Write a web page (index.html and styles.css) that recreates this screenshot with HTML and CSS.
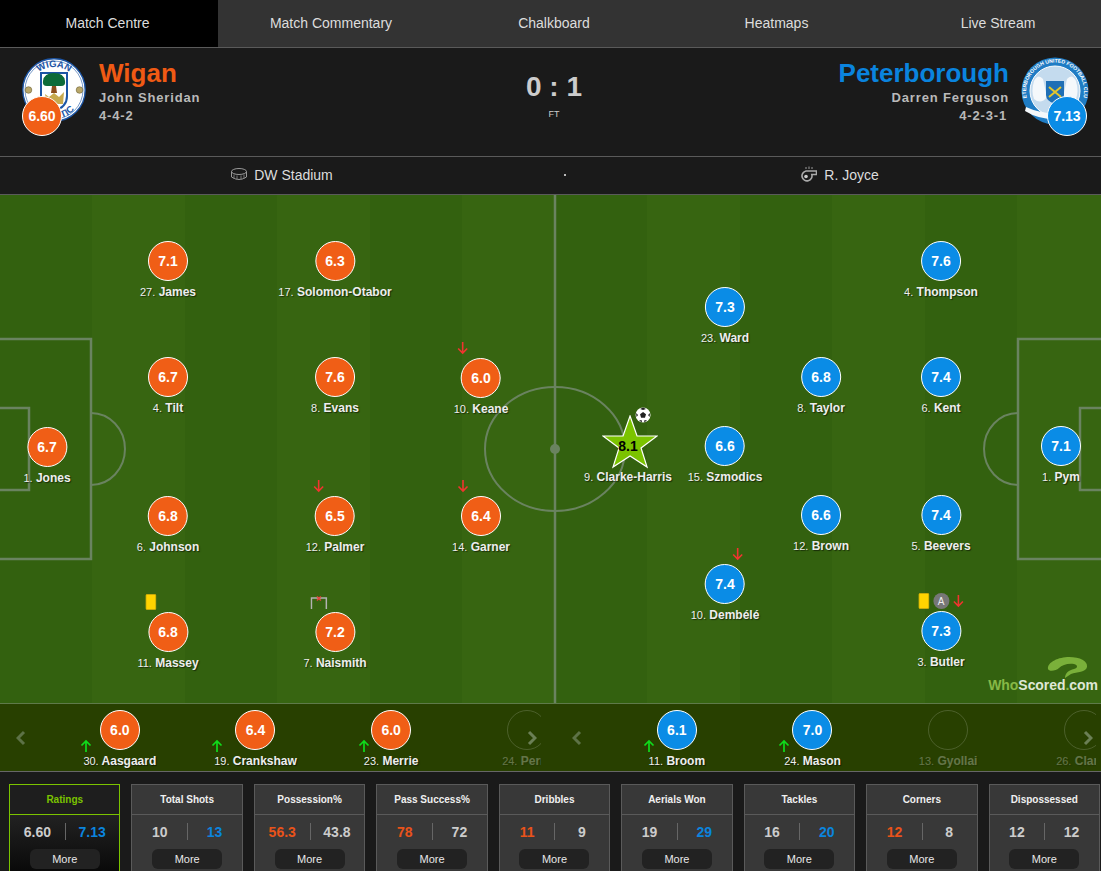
FILE: index.html
```html
<!DOCTYPE html>
<html lang="en">
<head>
<meta charset="utf-8">
<title>Wigan 0 : 1 Peterborough</title>
<link rel="stylesheet" href="styles.css">
</head>
<body>
<nav class="tabs">
  <a class="tab tab-active">Match Centre</a>
  <a class="tab">Match Commentary</a>
  <a class="tab">Chalkboard</a>
  <a class="tab">Heatmaps</a>
  <a class="tab tab-last">Live Stream</a>
</nav>

<header class="match">
  <div class="team">
    <div class="crest">
      <svg class="crest-svg" width="64" height="64" viewBox="0 0 64 64">
        <defs><path id="wigan-top" d="M7 34 A25 25 0 0 1 57 34"/><path id="wigan-bot" d="M5 34 A27 27 0 0 0 59 34"/></defs>
        <circle cx="32" cy="32" r="31.2" fill="#fff" stroke="#1c55a5" stroke-width="1.4"/>
        <circle cx="32" cy="32" r="29" fill="none" stroke="#1c55a5" stroke-width=".6"/>
        <text class="crest-text wigan-text"><textPath href="#wigan-top" startOffset="50%" text-anchor="middle">WIGAN</textPath></text>
        <text class="crest-text wigan-text"><textPath href="#wigan-bot" startOffset="50%" text-anchor="middle">ATHLETIC</textPath></text>
        <circle cx="6.500" cy="32" r="3.300" fill="#b9a76a" stroke="#6d6234" stroke-width=".6"/>
        <circle cx="57.500" cy="32" r="3.300" fill="#b9a76a" stroke="#6d6234" stroke-width=".6"/>
        <path d="M18 14 H46 V38 Q46 50 32 54 Q18 50 18 38 Z" fill="#1c55a5"/>
        <path d="M20 16 H44 V38 Q44 48 32 52 Q20 48 20 38 Z" fill="#fff"/>
        <path d="M21 23 Q22 15 32 15 Q42 15 43 23 Q44 28 39 28 H25 Q20 28 21 23 Z" fill="#0d6b39"/>
        <path d="M30 28 H34 L35 35 H29 Z" fill="#8c4d1c"/>
        <path d="M23 36 L27 39 L32 35 L37 39 L42 34 L41 46 H25 Z" fill="#c7a94e"/>
      </svg>
      <span class="team-rating rating-home">6.60</span>
    </div>
    <div class="team-info">
      <h1 class="team-name home-name">Wigan</h1>
      <p class="team-line">John Sheridan</p>
      <p class="team-line">4-4-2</p>
    </div>
  </div>
  <div class="score">
    <div class="score-value">0 : 1</div>
    <div class="score-status">FT</div>
  </div>
  <div class="team team-away">
    <div class="team-info info-away">
      <h1 class="team-name away-name">Peterborough</h1>
      <p class="team-line">Darren Ferguson</p>
      <p class="team-line line-formation">4-2-3-1</p>
    </div>
    <div class="crest crest-away">
      <svg class="crest-svg" width="68" height="68" viewBox="0 0 68 68">
        <defs><path id="pufc-ring" d="M6 42 A29 29 0 1 1 62 42"/></defs>
        <circle cx="34" cy="34" r="33.5" fill="#1f7cc4"/>
        <circle cx="34" cy="34" r="25" fill="#c4dbee" stroke="#fff" stroke-width="1"/>
        <text class="crest-text pufc-text"><textPath href="#pufc-ring" startOffset="50%" text-anchor="middle">PETERBOROUGH UNITED FOOTBALL CLUB</textPath></text>
        <path d="M13 24 Q17 16 22 22 L26 40 Q20 48 13 42 Q10 34 13 24 Z" fill="#f4f8fb"/>
        <path d="M55 24 Q51 16 46 22 L42 40 Q48 48 55 42 Q58 34 55 24 Z" fill="#f4f8fb"/>
        <path d="M25 24 H43 V38 Q43 44 34 47 Q25 44 25 38 Z" fill="#1f6fb5"/>
        <path d="M28 30 L40 40 M40 30 L28 40" stroke="#e5c62c" stroke-width="2"/>
        <path d="M5 50 Q22 58 44 56 L42 62 Q20 64 4 54 Z" fill="#f4f8fb"/>
      </svg>
      <span class="team-rating rating-away">7.13</span>
    </div>
  </div>
</header>

<div class="venue">
  <div class="venue-cell">
    <svg width="16" height="13" viewBox="0 0 16 13" class="venue-icon"><ellipse cx="8" cy="3.500" rx="7.500" ry="3" fill="none" stroke="#999"/><path d="M.5 3.500 V9 Q8 14 15.500 9 V3.500" fill="none" stroke="#999"/><path d="M3 6.500 V11 M6 7.500 V12 M10 7.500 V12 M13 6.500 V11" stroke="#777"/></svg>
    <span>DW Stadium</span>
  </div>
  <div class="venue-dot"></div>
  <div class="venue-cell venue-ref">
    <svg width="17" height="17" viewBox="0 0 17 17" class="venue-icon"><path d="M6 1 V3 M9 .5 V3 M12 1 V3" stroke="#999"/><path d="M6 5 H16.500 V8.500 H11.800 A5 5 0 1 1 6 5 Z" fill="none" stroke="#aaa" stroke-width="1.600"/><circle cx="6" cy="10.500" r="1.800" fill="#ccc"/></svg>
    <span>R. Joyce</span>
  </div>
</div>

<main class="pitch">
  <svg class="pitch-lines" width="1101" height="508" viewBox="0 0 1101 508">
    <path d="M0 144 H91 V364 H0 M0 213 H29 V295 H0 M1101 144 H1018 V364 H1101 M1101 213 H1080 V295 H1101"/>
    <path class="thin" d="M91 218 A34 36 0 0 1 91 290 M1018 218 A34 36 0 0 0 1018 290"/>
    <path d="M555 0 V508"/>
    <ellipse class="thin" cx="555" cy="254" rx="70" ry="62"/>
    <circle class="spot" cx="555" cy="254" r="5"/>
  </svg>

  <div class="player" style="--x:47;--y:447"><span class="badge home">6.7</span><span class="label"><i>1.</i> Jones</span></div>
  <div class="player" style="--x:168;--y:261"><span class="badge home">7.1</span><span class="label"><i>27.</i> James</span></div>
  <div class="player" style="--x:168;--y:377"><span class="badge home">6.7</span><span class="label"><i>4.</i> Tilt</span></div>
  <div class="player" style="--x:168;--y:516"><span class="badge home">6.8</span><span class="label"><i>6.</i> Johnson</span></div>
  <div class="player" style="--x:168;--y:632"><span class="badge home">6.8<svg class="ev ev-card" width="11" height="16" viewBox="0 0 11 16"><rect x=".5" y=".5" width="10" height="15" rx="1" fill="#ffd400" stroke="#c7a90a"/></svg></span><span class="label"><i>11.</i> Massey</span></div>
  <div class="player" style="--x:335;--y:261"><span class="badge home">6.3</span><span class="label"><i>17.</i> Solomon-Otabor</span></div>
  <div class="player" style="--x:335;--y:377"><span class="badge home">7.6</span><span class="label"><i>8.</i> Evans</span></div>
  <div class="player" style="--x:335;--y:516"><span class="badge home">6.5<svg class="ev ev-arrow-near" width="12" height="14" viewBox="0 0 12 14"><use href="#arrow-down"/></svg></span><span class="label"><i>12.</i> Palmer</span></div>
  <div class="player" style="--x:335;--y:632"><span class="badge home">7.2<svg class="ev ev-goal" width="17" height="13" viewBox="0 0 17 13"><path d="M1 13 V2 H16 V13" fill="none" stroke="#b3b3b3" stroke-width="1.600"/><path d="M6.500 .5 L10.500 4.500 M10.500 .5 L6.500 4.500" stroke="#e8413f" stroke-width="1.400"/></svg></span><span class="label"><i>7.</i> Naismith</span></div>
  <div class="player" style="--x:481;--y:378"><span class="badge home">6.0<svg class="ev ev-arrow-left" width="12" height="14" viewBox="0 0 12 14"><use href="#arrow-down"/></svg></span><span class="label"><i>10.</i> Keane</span></div>
  <div class="player" style="--x:481;--y:516"><span class="badge home">6.4<svg class="ev ev-arrow-left" width="12" height="14" viewBox="0 0 12 14"><use href="#arrow-down"/></svg></span><span class="label"><i>14.</i> Garner</span></div>

  <div class="player" style="--x:1061;--y:446"><span class="badge away">7.1</span><span class="label"><i>1.</i> Pym</span></div>
  <div class="player" style="--x:941;--y:261"><span class="badge away">7.6</span><span class="label"><i>4.</i> Thompson</span></div>
  <div class="player" style="--x:941;--y:377"><span class="badge away">7.4</span><span class="label"><i>6.</i> Kent</span></div>
  <div class="player" style="--x:941;--y:515"><span class="badge away">7.4</span><span class="label"><i>5.</i> Beevers</span></div>
  <div class="player" style="--x:941;--y:631"><span class="badge away">7.3<svg class="ev ev-card" width="11" height="16" viewBox="0 0 11 16"><rect x=".5" y=".5" width="10" height="15" rx="1" fill="#ffd400" stroke="#c7a90a"/></svg><span class="ev ev-captain">A</span><svg class="ev ev-arrow-far" width="12" height="14" viewBox="0 0 12 14"><use href="#arrow-down"/></svg></span><span class="label"><i>3.</i> Butler</span></div>
  <div class="player" style="--x:821;--y:377"><span class="badge away">6.8</span><span class="label"><i>8.</i> Taylor</span></div>
  <div class="player" style="--x:821;--y:515"><span class="badge away">6.6</span><span class="label"><i>12.</i> Brown</span></div>
  <div class="player" style="--x:725;--y:307"><span class="badge away">7.3</span><span class="label"><i>23.</i> Ward</span></div>
  <div class="player" style="--x:725;--y:446"><span class="badge away">6.6</span><span class="label"><i>15.</i> Szmodics</span></div>
  <div class="player" style="--x:725;--y:584"><span class="badge away">7.4<svg class="ev ev-arrow-right" width="12" height="14" viewBox="0 0 12 14"><use href="#arrow-down"/></svg></span><span class="label"><i>10.</i> Dembélé</span></div>
  <div class="player" style="--x:628;--y:446">
    <span class="badge star">
      <svg class="star-shape" width="56" height="54" viewBox="0 0 56 54"><polygon points="28,1 35,21 55,21 39,33 45,52 28,41 11,52 17,33 1,21 21,21" fill="#7bc300" stroke="#fff" stroke-width="1.200"/></svg>
      <span class="star-value">8.1</span>
      <svg class="ev ev-ball" width="16" height="16" viewBox="0 0 16 16"><circle cx="8" cy="8" r="7.500" fill="#fff"/><polygon points="8,5 11,7.200 9.900,10.700 6.100,10.700 5,7.200" fill="#222"/><path d="M8 .5 L5 2 L8 3 L11 2 Z M1 6 L1.500 10 L3 8 Z M15 6 L14.500 10 L13 8 Z M4 13.500 L7 15.500 L6.500 13 Z M12 13.500 L9 15.500 L9.500 13 Z" fill="#222"/></svg>
    </span>
    <span class="label"><i>9.</i> Clarke-Harris</span>
  </div>

  <div class="logo">
    <svg class="logo-mark" width="42" height="21" viewBox="0 0 42 21"><path d="M1 12 C0 5 12 0 22 0 C33 0 41 4 40 10 C39 15 30 15 24 17 L18 21 C18 16 22 13 27 12 C31 11 31 8 27 7 C21 6 15 8 12 11 C9 14 2 15 1 12 Z" fill="#7ab03a"/></svg>
    <span class="logo-who">Who</span><span>Scored</span><span class="logo-dot">.</span><span>com</span>
  </div>
</main>

<section class="bench">
  <div class="bench-side bench-home">
    <div class="sub"><span class="badge home">6.0<svg class="sub-arrow" style="--dx:-35" width="12" height="14" viewBox="0 0 12 14"><use href="#arrow-up"/></svg></span><span class="label"><i>30.</i> Aasgaard</span></div>
    <div class="sub"><span class="badge home">6.4<svg class="sub-arrow" style="--dx:-39" width="12" height="14" viewBox="0 0 12 14"><use href="#arrow-up"/></svg></span><span class="label"><i>19.</i> Crankshaw</span></div>
    <div class="sub"><span class="badge home">6.0<svg class="sub-arrow" style="--dx:-28" width="12" height="14" viewBox="0 0 12 14"><use href="#arrow-up"/></svg></span><span class="label"><i>23.</i> Merrie</span></div>
    <div class="sub sub-unused"><span class="badge empty"></span><span class="label"><i>24.</i> Perry</span></div>
  </div>
  <div class="bench-side bench-away">
    <div class="sub"><span class="badge away">6.1<svg class="sub-arrow" style="--dx:-29" width="12" height="14" viewBox="0 0 12 14"><use href="#arrow-up"/></svg></span><span class="label"><i>11.</i> Broom</span></div>
    <div class="sub"><span class="badge away">7.0<svg class="sub-arrow" style="--dx:-29" width="12" height="14" viewBox="0 0 12 14"><use href="#arrow-up"/></svg></span><span class="label"><i>24.</i> Mason</span></div>
    <div class="sub sub-unused"><span class="badge empty"></span><span class="label"><i>13.</i> Gyollai</span></div>
    <div class="sub sub-unused"><span class="badge empty"></span><span class="label"><i>26.</i> Clarke</span></div>
  </div>
  <svg class="chev chev-1" width="10" height="16" viewBox="0 0 10 16"><path d="M8 2 L2 8 L8 14"/></svg>
  <svg class="chev chev-2" width="10" height="16" viewBox="0 0 10 16"><path d="M2 2 L8 8 L2 14"/></svg>
  <svg class="chev chev-3" width="10" height="16" viewBox="0 0 10 16"><path d="M8 2 L2 8 L8 14"/></svg>
  <svg class="chev chev-4" width="10" height="16" viewBox="0 0 10 16"><path d="M2 2 L8 8 L2 14"/></svg>
</section>

<section class="stats">
  <article class="stat stat-active"><h2 class="stat-title">Ratings</h2><div class="stat-body"><div class="stat-values"><b class="v">6.60</b><b class="v va">7.13</b></div><a class="more">More</a></div></article>
  <article class="stat"><h2 class="stat-title">Total Shots</h2><div class="stat-body"><div class="stat-values"><b class="v">10</b><b class="v va">13</b></div><a class="more">More</a></div></article>
  <article class="stat"><h2 class="stat-title">Possession%</h2><div class="stat-body"><div class="stat-values"><b class="v vh">56.3</b><b class="v">43.8</b></div><a class="more">More</a></div></article>
  <article class="stat"><h2 class="stat-title">Pass Success%</h2><div class="stat-body"><div class="stat-values"><b class="v vh">78</b><b class="v">72</b></div><a class="more">More</a></div></article>
  <article class="stat"><h2 class="stat-title">Dribbles</h2><div class="stat-body"><div class="stat-values"><b class="v vh">11</b><b class="v">9</b></div><a class="more">More</a></div></article>
  <article class="stat"><h2 class="stat-title">Aerials Won</h2><div class="stat-body"><div class="stat-values"><b class="v">19</b><b class="v va">29</b></div><a class="more">More</a></div></article>
  <article class="stat"><h2 class="stat-title">Tackles</h2><div class="stat-body"><div class="stat-values"><b class="v">16</b><b class="v va">20</b></div><a class="more">More</a></div></article>
  <article class="stat"><h2 class="stat-title">Corners</h2><div class="stat-body"><div class="stat-values"><b class="v vh">12</b><b class="v">8</b></div><a class="more">More</a></div></article>
  <article class="stat"><h2 class="stat-title">Dispossessed</h2><div class="stat-body"><div class="stat-values"><b class="v">12</b><b class="v">12</b></div><a class="more">More</a></div></article>
</section>

<svg class="defs" width="0" height="0" aria-hidden="true">
  <symbol id="arrow-down" viewBox="0 0 12 14"><path d="M6 1 V12 M1.500 7.500 L6 12 L10.500 7.500" fill="none" stroke="#f0342f" stroke-width="1.600"/></symbol>
  <symbol id="arrow-up" viewBox="0 0 12 14"><path d="M6 13 V2 M1.500 6.500 L6 2 L10.500 6.500" fill="none" stroke="#0fdc1b" stroke-width="1.700"/></symbol>
</svg>
</body>
</html>
```
FILE: styles.css
```css
* { box-sizing: border-box; }
html, body { margin: 0; padding: 0; height: 871px; overflow: hidden; }
body { background: #1a1a1a; color: #ddd; font-family: "Liberation Sans", Arial, sans-serif; width: 1101px; }
h1, h2, p { margin: 0; }

/* Tabs */
.tabs { display: grid; grid-template-columns: 218px 226px 220px 225px 212px; height: 48px; background: #333; border-bottom: 1px solid #5a5a5a; }
.tab { display: flex; align-items: center; justify-content: center; font-size: 14px; color: #ddd; padding-bottom: 1px; }
.tab-active { background: #000; padding-right: 3px; }
.tab-last { padding-left: 6px; }

/* Match header */
.match { display: grid; grid-template-columns: 484px 140px 1fr; height: 109px; border-bottom: 1px solid #5a5a5a; background: #1a1a1a; }
.team { display: flex; gap: 13px; padding: 10px 0 0 22px; }
.team-away { justify-content: flex-end; padding: 10px 12px 0 0; gap: 12px; }
.crest { position: relative; width: 64px; height: 64px; flex: none; }
.crest-away { width: 68px; height: 68px; margin-top: -1px; }
.crest-svg { display: block; }
.crest-text { font-family: "Liberation Sans", Arial, sans-serif; font-weight: 700; }
.wigan-text { font-size: 9.5px; fill: #1c55a5; }
.pufc-text { font-size: 5.2px; fill: #fff; }
.team-rating { position: absolute; width: 40px; height: 40px; border-radius: 50%; border: 1px solid #fff; display: flex; align-items: center; justify-content: center; font-size: 14px; font-weight: 700; color: #fff; }
.rating-home { background: #f05e16; left: 0; top: 38px; }
.rating-away { background: #0a8ce6; right: 2px; top: 39px; }
.team-name { font-size: 26px; line-height: 30px; font-weight: 700; }
.home-name { color: #f05a14; }
.away-name { color: #0a84de; }
.info-away { text-align: right; }
.team-line { font-size: 13px; font-weight: 700; color: #b9b9b9; letter-spacing: .85px; line-height: 18px; }
.team-line:nth-of-type(1) { margin-top: 1px; }
.line-formation { padding-right: 2px; }
.score { text-align: center; padding-top: 22px; }
.score-value { font-size: 28px; line-height: 34px; font-weight: 700; color: #ccc; }
.score-status { font-size: 9px; line-height: 12px; color: #ccc; margin-top: 4px; }

/* Venue */
.venue { display: grid; grid-template-columns: 564px 1px 1fr; height: 38px; border-bottom: 1px solid #5a5a5a; align-items: center; font-size: 14px; color: #ddd; padding-bottom: 2px; }
.venue-cell { display: flex; align-items: center; justify-content: center; gap: 7px; }
.venue-ref { padding-left: 13px; }
.venue-icon { flex: none; }
.venue-dot { width: 2px; height: 2px; background: #bbb; }

/* Pitch */
.pitch { position: relative; height: 508px; overflow: hidden; background: repeating-linear-gradient(90deg, #33610f 0, #33610f 92.5px, #376511 92.5px, #376511 185px); }
.pitch-lines { position: absolute; left: 0; top: 0; fill: none; }
.pitch-lines path, .pitch-lines ellipse { stroke: #6a8360; stroke-width: 2.5; fill: none; }
.pitch-lines .thin { stroke-width: 2; }
.pitch-lines .spot { fill: #6a8360; }
.player { position: absolute; left: calc(var(--x) * 1px); top: calc((var(--y) - 195 - 20) * 1px); transform: translateX(-50%); display: flex; flex-direction: column; align-items: center; gap: 4px; }
.badge { position: relative; width: 40px; height: 40px; flex: none; border-radius: 50%; border: 1px solid #fff; display: flex; align-items: center; justify-content: center; font-size: 14px; font-weight: 700; color: #fff; }
.home { background: #f05e16; }
.away { background: #0a8ce6; }
.empty { border-color: rgba(255,255,255,.55); }
.label { font-size: 12px; line-height: 14px; font-weight: 700; color: #eee; white-space: nowrap; text-shadow: 1px 1px 1px rgba(0,0,0,.55); }
.label i { font-style: normal; font-weight: 400; font-size: 11px; }

.ev { position: absolute; }
.ev-card { left: -4px; top: -19px; }
.ev-goal { left: -6px; top: -17px; }
.ev-arrow-left { left: -5px; top: -18px; }
.ev-arrow-near { left: -3px; top: -18px; }
.ev-arrow-right { left: 26px; top: -18px; }
.ev-arrow-far { left: 30px; top: -18px; }
.ev-captain { left: 11px; top: -19px; width: 16px; height: 16px; border-radius: 50%; background: #777; color: #eee; font-size: 10px; font-weight: 400; display: flex; align-items: center; justify-content: center; }
.ev-ball { left: 27px; top: -19px; }

.star { border: 0; background: none; color: #000; }
.star-shape { position: absolute; left: -6px; top: -11px; }
.star-value { position: relative; font-size: 14px; }

.logo { position: absolute; right: 3px; bottom: 10px; display: flex; font-size: 14px; line-height: 16px; font-weight: 700; color: #dfe8d6; letter-spacing: -.05px; }
.logo-who { color: #86b846; }
.logo-dot { color: #86b846; }
.logo-mark { position: absolute; left: 59px; top: -20px; }

/* Bench */
.bench { position: relative; display: flex; height: 69px; background: #284000; border-top: 1px solid #5f7a4a; border-bottom: 1px solid #666; padding-top: 6px; }
.bench-side { display: flex; overflow: hidden; flex: none; height: 60px; }
.bench-home { margin-left: 52px; width: 489px; }
.bench-away { margin-left: 68px; width: 487px; }
.sub { flex: none; width: 135.67px; display: flex; flex-direction: column; align-items: center; gap: 4px; }
.sub-unused { opacity: .3; }
.sub-arrow { position: absolute; left: calc((var(--dx) + 14) * 1px); top: 28px; }
.chev { position: absolute; top: 26px; fill: none; stroke: #5d7246; stroke-width: 3; }
.chev-1 { left: 16px; }
.chev-2 { left: 527px; stroke: #6b7f55; }
.chev-3 { left: 572px; }
.chev-4 { left: 1083px; stroke: #6b7f55; }

/* Stats */
.stats { display: grid; grid-template-columns: repeat(9, 1fr); gap: 11px; padding: 12px 1px 0 9px; }
.stat { border: 1px solid #5a5a5a; background: #383838; height: 110px; }
.stat-title { height: 30px; border-bottom: 1px solid #5a5a5a; display: flex; align-items: center; justify-content: center; font-size: 10px; font-weight: 700; color: #f0f0f0; }
.stat-body { padding-top: 8px; display: flex; flex-direction: column; align-items: center; }
.stat-values { position: relative; display: grid; grid-template-columns: 1fr 1fr; width: 100%; height: 18px; align-items: center; }
.stat-values::after { content: ""; position: absolute; left: 50%; top: 0; width: 1px; height: 17px; background: #666; }
.v { font-size: 14px; color: #ccc; text-align: center; }
.vh { color: #e9531a; }
.va { color: #0b84dd; }
.more { margin-top: 8px; width: 70px; height: 20px; background: #222; border-radius: 6px; font-size: 11px; color: #e8e8e8; display: flex; align-items: center; justify-content: center; }
.stat-active { border-color: #7bc300; background: linear-gradient(#1e1e1e 0, #1e1e1e 30px, #222 30px, #000 100%); }
.stat-active .stat-title { border-bottom-color: #7bc300; color: #7bc300; }
```
